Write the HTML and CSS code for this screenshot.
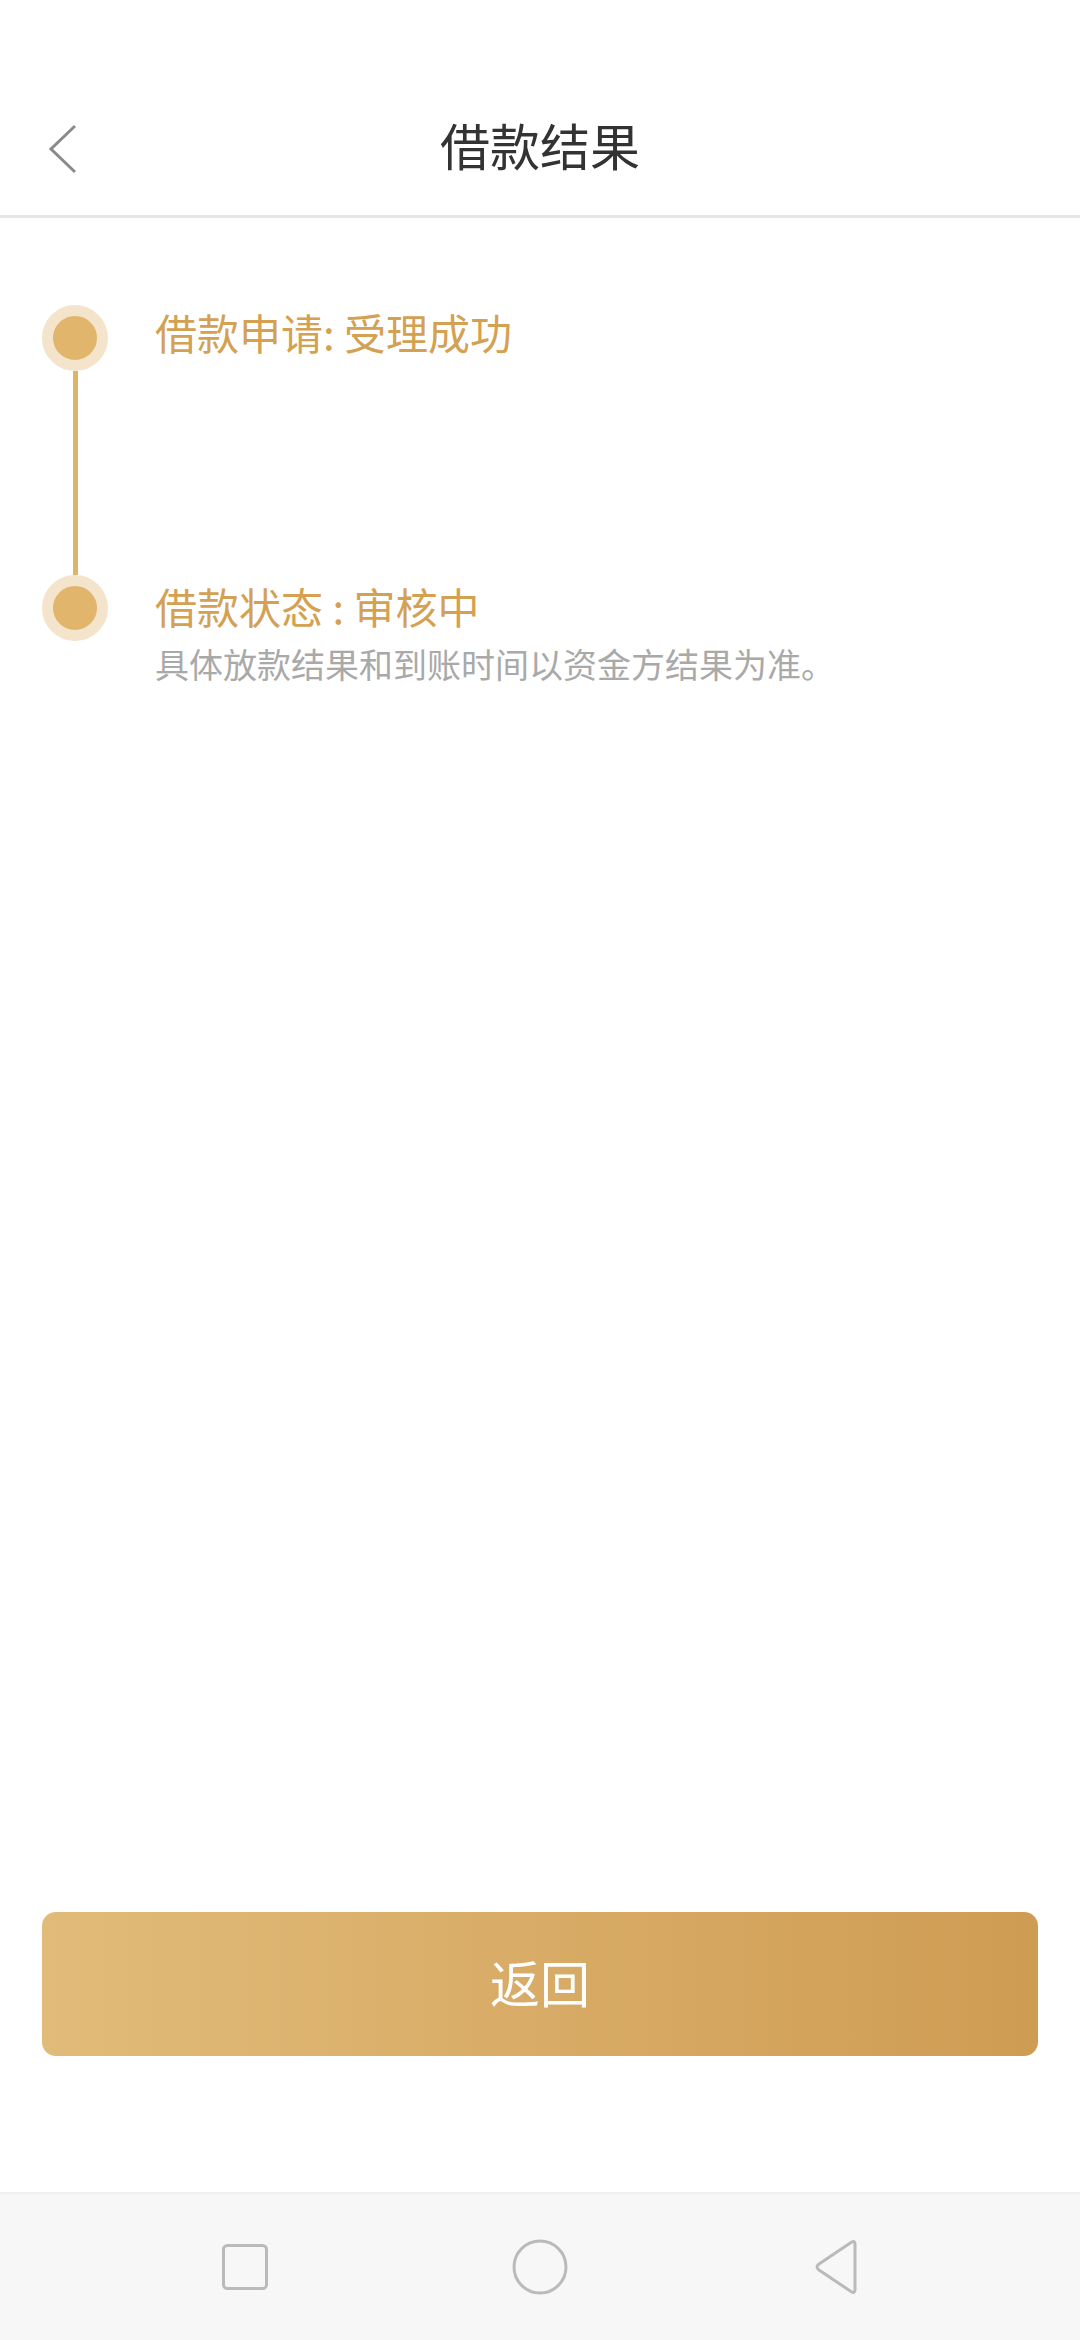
FILE: index.html
```html
<!DOCTYPE html>
<html>

<head>
  <meta charset="UTF-8">
  <title>借款结果</title>
  <link rel="stylesheet" href="styles.css">
</head>

<body>
  <div class="page">
    <div class="header">
      <div class="header__back">
        <svg width="32" height="50" viewBox="0 0 32 50">
          <polyline points="28,2 4,25 28,48" fill="none" stroke="#8a8a8a" stroke-width="3" />
        </svg>
      </div>
      <h1 class="header__title">借款结果</h1>
    </div>

    <div class="steps">
      <div class="step step--first">
        <div class="step__axis">
          <div class="step__dot"></div>
          <div class="step__line"></div>
        </div>
        <div class="step__body">
          <p class="step__title">借款申请: 受理成功</p>
        </div>
      </div>
      <div class="step">
        <div class="step__axis">
          <div class="step__dot"></div>
        </div>
        <div class="step__body">
          <p class="step__title">借款状态 : 审核中</p>
          <p class="step__note">具体放款结果和到账时间以资金方结果为准。</p>
        </div>
      </div>
    </div>

    <div class="footer">
      <button class="footer__button">返回</button>
    </div>

    <div class="navbar">
      <svg class="navbar__icon" width="60" height="60" viewBox="0 0 60 60">
        <rect x="8.5" y="8.5" width="43" height="43" rx="4" fill="none" stroke="#bababa" stroke-width="3" />
      </svg>
      <svg class="navbar__icon" width="60" height="60" viewBox="0 0 60 60">
        <circle cx="30" cy="30" r="26" fill="none" stroke="#bababa" stroke-width="3" />
      </svg>
      <svg class="navbar__icon" width="60" height="60" viewBox="0 0 60 60">
        <path d="M50 7 L50 53 Q50 57 46 54.5 L14 33 Q10 30 14 27 L46 5.5 Q50 3 50 7 Z" fill="none" stroke="#bababa" stroke-width="3" stroke-linejoin="round" />
      </svg>
    </div>
  </div>
</body>

</html>
```

FILE: styles.css
```css
* {
  box-sizing: border-box;
}

body {
  margin: 0;
  font-family: "Noto Sans CJK SC", "Noto Sans", sans-serif;
  background-color: #ffffff;
}

.page {
  display: flex;
  flex-direction: column;
  width: 1080px;
  height: 2340px;
}

/* header */
.header {
  position: relative;
  display: flex;
  justify-content: center;
  align-items: center;
  height: 218px;
  padding-top: 73px;
  border-bottom: 3px solid #e6e6e6;
}

.header__back {
  position: absolute;
  left: 47px;
  top: 124px;
  display: flex;
}

.header__title {
  margin: 0;
  font-size: 50px;
  font-weight: 400;
  color: #333333;
}

/* timeline */
.steps {
  flex: 1;
  padding: 87px 42px 0;
}

.step {
  display: flex;
  column-gap: 47px;
}

.step--first {
  height: 270px;
}

.step__axis {
  display: flex;
  flex-direction: column;
  align-items: center;
  width: 66px;
}

.step__dot {
  width: 66px;
  height: 66px;
  border-radius: 50%;
  border: 11px solid #f3e4cb;
  background-color: #e2b56c;
  flex-shrink: 0;
}

.step__line {
  flex: 1;
  width: 5px;
  background-color: #dfb467;
}

.step__title {
  margin: -2px 0 2px;
  font-size: 42px;
  line-height: 66px;
  color: #d4a153;
}

.step--first .step__title {
  margin-top: -6px;
}

.step__note {
  margin: 0;
  font-size: 34px;
  line-height: 46px;
  color: #a9a9a9;
}

/* return button */
.footer {
  padding: 0 42px 136px;
}

.footer__button {
  width: 100%;
  height: 144px;
  padding-bottom: 8px;
  border: none;
  border-radius: 14px;
  background: linear-gradient(to right, #e1bb79, #cf9c53);
  color: #ffffff;
  font-family: inherit;
  font-size: 50px;
}

/* system navigation */
.navbar {
  display: flex;
  justify-content: center;
  align-items: center;
  column-gap: 235px;
  height: 148px;
  background-color: #f7f7f7;
  border-top: 2px solid #efefef;
}
```
